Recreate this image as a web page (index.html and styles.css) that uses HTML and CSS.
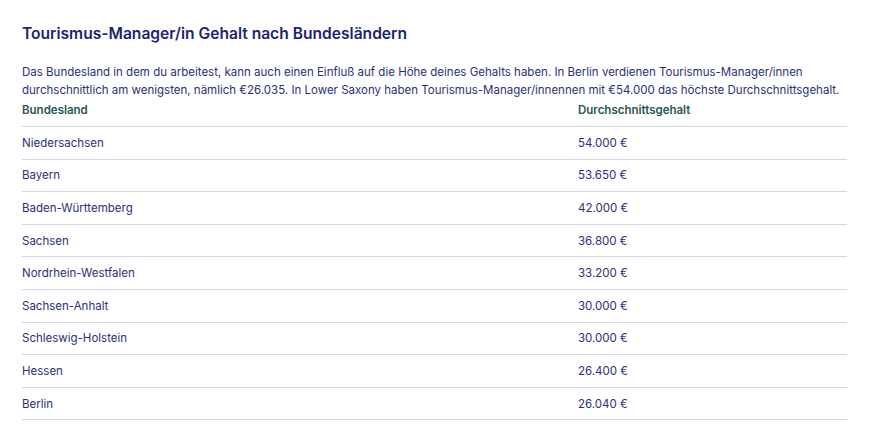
FILE: index.html
```html
<!DOCTYPE html>
<html lang="de">
<head>
    <meta charset="UTF-8">
    <meta name="viewport" content="width=device-width, initial-scale=1.0">
    <title>Gehalt nach Bundesländern</title>
    <link rel="stylesheet" href="styles.css">
</head>
<body>
    <div class="section">
        <!-- Titel -->
        <h2 class="title">Tourismus-Manager/in Gehalt nach Bundesländern</h2>

        <p class="intro">Das Bundesland in dem du arbeitest, kann auch einen Einfluß auf die Höhe deines Gehalts haben. In Berlin verdienen Tourismus-Manager/innen durchschnittlich am wenigsten, nämlich €26.035. In Lower Saxony haben Tourismus-Manager/innennen mit €54.000 das höchste Durchschnittsgehalt.</p>

        <!-- Tabelle -->
        <table class="salary-table">
            <thead>
                <tr>
                    <th>Bundesland</th>
                    <th>Durchschnittsgehalt</th>
                </tr>
            </thead>
            <tbody>
                <tr><td>Niedersachsen</td><td>54.000 €</td></tr>
                <tr><td>Bayern</td><td>53.650 €</td></tr>
                <tr><td>Baden-Württemberg</td><td>42.000 €</td></tr>
                <tr><td>Sachsen</td><td>36.800 €</td></tr>
                <tr><td>Nordrhein-Westfalen</td><td>33.200 €</td></tr>
                <tr><td>Sachsen-Anhalt</td><td>30.000 €</td></tr>
                <tr><td>Schleswig-Holstein</td><td>30.000 €</td></tr>
                <tr><td>Hessen</td><td>26.400 €</td></tr>
                <tr><td>Berlin</td><td>26.040 €</td></tr>
            </tbody>
        </table>
    </div>
</body>
</html>
```

FILE: styles.css
```css
/* Layout */
body {
    margin: 0;
    background: #fff;
    font-family: Inter, "Liberation Sans", sans-serif;
    color: #2b3079;
}
.section {
    padding: 22px 23px 0 22px;
}
.title {
    margin: 0 0 17px 0;
    font-size: 15.6px;
    font-weight: 600;
    color: #1b2473;
    line-height: 24px;
}
.intro {
    margin: 0;
    font-size: 11.5px;
    line-height: 18px;
}
.salary-table {
    width: 100%;
    border-collapse: collapse;
    font-size: 11.5px;
}
.salary-table th {
    text-align: left;
    font-weight: 600;
    color: #275654;
    padding: 3px 0 8px 0;
    line-height: 16px;
    border-bottom: 1px solid #d6d6e0;
}
.salary-table td {
    padding: 0;
    height: 31.6px;
    border-bottom: 1px solid #d6d6e0;
}
.salary-table th:first-child,
.salary-table td:first-child {
    width: 556px;
}
```
